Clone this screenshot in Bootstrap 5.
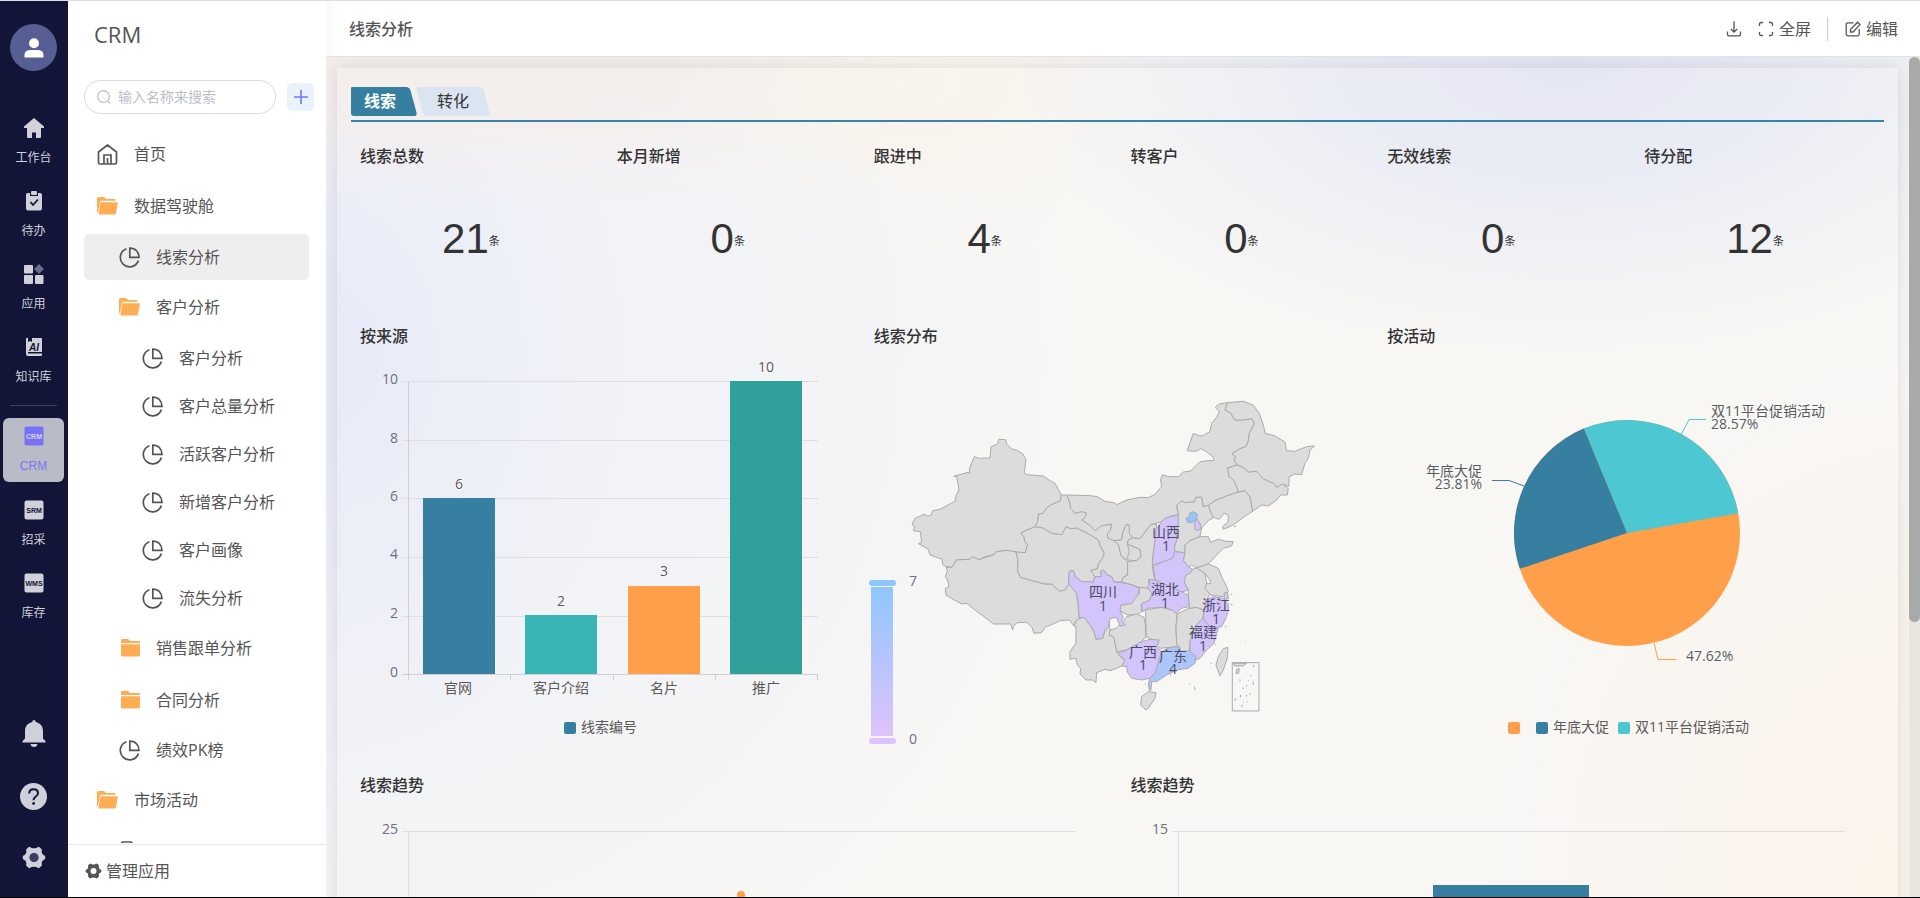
<!DOCTYPE html>
<html lang="zh-CN">
<head>
<meta charset="utf-8">
<meta name="viewport" content="width=device-width, initial-scale=1">
<title>CRM - 线索分析</title>
<link href="https://cdn.jsdelivr.net/npm/bootstrap@5.3.0/dist/css/bootstrap.min.css" rel="stylesheet">
<style>
  :root { --ink:#555; --rail:#121537; --blue:#367fa0; --orange:#ff9f4a; --teal:#4dc7d1; }
  body { font-family:"Open Sans","Noto Sans CJK SC",sans-serif; font-size:16px; line-height:24px; color:var(--ink); border-top:1px solid #dedede; border-bottom:1px solid #000; background:#fff; }
  button { font:inherit; }
  a { color:inherit; text-decoration:none; }
  svg { flex:none; }

  .rail { width:68px; background:var(--rail); color:#d0d1da; font-size:12px; line-height:18px; padding:23px 4px 0 3px; }
  .avatar { width:47px; height:47px; background:#565e93; }
  .rail-list { padding-top:39px; }
  .rail-link { width:61px; height:64px; padding-top:8px; gap:11px; border-radius:6px; margin-bottom:9px; }
  .rail-link.current { background:#b9bbc6; color:#7b74f0; font-family:"Liberation Sans",sans-serif; margin-bottom:10px; }
  .rail-rule { width:47px; height:1px; background:#3d4060; margin:3px 0 12px; }
  .rail-foot { gap:36px; padding-bottom:28px; }
  .rail-foot button { line-height:0; color:#cfd0d9; }
  .rail-tag { font:bold 7px "Liberation Sans",sans-serif; }

  .side { width:258px; background:#fff; }
  .side-title { font-size:22px; line-height:30px; padding:18px 0 0 26px; font-weight:400; }
  .side-search { padding:31px 12px 0 16px; gap:11px; }
  .search-box { height:34px; border:1px solid #d9dae6; border-radius:17px; padding:0 12px; gap:7px; color:#b9bcc6; }
  .search-box input { font-size:14px; color:#555; background:none; }
  .search-box input::placeholder { color:#bbbec8; opacity:1; }
  .add-btn { width:27px; height:28px; border-radius:5px; background:#eaf2fe; color:#6f79f7; }
  .tree { padding:14px 17px 0 16px; margin-bottom:1px; }
  .tree ul { padding-top:1px; }
  .tree li { display:flow-root; }
  .tree a { height:46px; margin:1px 0; padding-left:13px; border-radius:5px; }
  .tree a.folder { height:50px; }
  .tree ul a { padding-left:35px; }
  .tree ul ul a { padding-left:58px; }
  .tree a svg { margin-right:16px; }
  .tree a.current { background:#eee; }
  .side-foot { border-top:1px solid #e6e6e6; height:53px; padding:0 17px; gap:5px; }

  .topbar { height:56px; border-bottom:1px solid #e3e1e1; padding:0 22px 0 23px; background:linear-gradient(90deg,#f9f9f9,#fff 14px); }
  .topbar h1 { font-size:16px; line-height:24px; font-weight:500; color:#555; }
  .topbar button { gap:5px; color:#555; }
  .topbar-rule { width:1px; height:24px; background:#ccc; margin:0 17px 0 16px; }

  .canvas-bg { background:
      radial-gradient(ellipse 560px 300px at 1240px 0, #e2e5f3 0, #e9ebf5 40%, #e9ebf500 100%),
      radial-gradient(ellipse 260px 170px at 600px 30px, #f9f4ea 0, #f9f4ea00 100%),
      radial-gradient(ellipse 640px 150px at 180px 0, #f4edeb 0, #f4edeb 30%, #f4edeb00 100%),
      radial-gradient(ellipse 300px 420px at 0 300px, #e7eaf8 0, #e7eaf800 100%),
      radial-gradient(ellipse 760px 760px at 0 300px, #eff1f8 0, #f1f2f7 50%, #f1f2f700 100%),
      radial-gradient(ellipse 440px 560px at 100% 100%, #fbf3ea 0, #fbf3eb 30%, #fbf3ea00 100%),
      #f8f7f4; }
  .panel { margin:11px 11px 0; padding:19px 14px 0; background:rgba(255,255,255,.08); box-shadow:0 0 16px rgba(60,50,60,.13); }
  .tabs { border-bottom:2px solid #3b83a4; padding-bottom:4px; margin-bottom:1px; }
  .tab { height:29px; line-height:29px; color:#333; }
  .tab svg { left:0; top:0; }
  .tab span { position:relative; }
  .tab-a { width:66px; color:#fff; font-weight:700; }
  .tab-a span { margin-left:13px; }
  .tab-b { width:74px; margin-left:-1px; }
  .tab-b span { margin-left:21px; }

  .tiles { display:grid; grid-template-columns:repeat(6,1fr); gap:8px; padding-top:7px; }
  .tile { padding-top:14px; min-width:0; }
  .tile h2 { font-size:16px; line-height:24px; font-weight:500; color:#333; padding-left:9px; margin:0; }
  .figure-tile { height:172px; }
  .figure-value { font:42px/42px "Liberation Sans",sans-serif; color:#333; padding:8px 9px 0 0; }
  .figure-value small { font:11px/11px "Noto Sans CJK SC",sans-serif; padding-top:2px; }
  .third { grid-column:span 2; height:441px; }
  .half { grid-column:span 3; height:441px; }
  .chart { display:block; width:100%; height:400px; font-size:14px; fill:#5a5a5a; }
  .chart .halo { paint-order:stroke; stroke:#fafafa; stroke-width:2px; }
  .scroll { width:11px; background:#e9e6e0; }
  .scroll-thumb { height:565px; background:#a9a9a9; border-radius:6px; }
</style>
</head>
<body class="vh-100 d-flex overflow-hidden">

<svg width="0" height="0" class="position-absolute" aria-hidden="true">
  <defs>
    <symbol id="i-pie" viewBox="0 0 21 21"><path d="M7.5 1.8A9.3 9.3 0 1 0 19.4 13.6M10.8 1.2V10.4H20C20 5 16.500 1.200 10.800 1.200Z" fill="none" stroke="#555" stroke-width="1.700"/></symbol>
    <symbol id="i-open" viewBox="0 0 21 18"><path d="M0 1.500Q0 0 1.500 0H7L9 2H17.500Q18.500 2 18.500 3V3.800H4.500Q3.200 3.800 3 5L1 15H0Z" fill="#ffad55"/><path d="M4.300 5.200H20Q21 5.200 20.800 6.200L18.900 16.500Q18.600 17.600 17.500 17.600H1.800Q1.300 17.600 1.500 16.800L3.200 6.200Q3.400 5.200 4.300 5.200Z" fill="#ffad55"/></symbol>
    <symbol id="i-folder" viewBox="0 0 21 18"><path d="M2 1Q2 0 3 0H9L11 2H20Q21 2 21 3V4H2ZM2 5.200H21V16.500Q21 17.500 20 17.500H3Q2 17.500 2 16.500Z" fill="#ffad55"/></symbol>
    <symbol id="i-gear" viewBox="0 0 24 24"><path fill-rule="evenodd" d="M6 1.500Q7 .5 8.200 1.200L9.500 2Q12 2.800 14.500 2L15.800 1.200Q17 .5 18 1.500L20 3.500Q20.500 4.300 20 5.500Q19.800 8 21.500 9.200L23 9.800Q23.800 10.300 23.800 12T23 14.200L21.500 14.800Q19.800 16 20 18.500Q20.500 19.700 20 20.500L18 22.500Q17 23.500 15.800 22.800L14.500 22Q12 21.200 9.500 22L8.200 22.800Q7 23.500 6 22.500L4 20.500Q3.500 19.700 4 18.500Q4.200 16 2.500 14.800L1 14.200Q.2 13.700 .2 12T1 9.800L2.500 9.200Q4.200 8 4 5.500Q3.500 4.300 4 3.500ZM12 7.500A4.500 4.500 0 1 0 12 16.500A4.500 4.500 0 1 0 12 7.500Z" fill="currentColor"/></symbol>
  </defs>
</svg>

<nav class="rail d-flex flex-column align-items-center flex-shrink-0" aria-label="应用">
  <button class="avatar btn p-0 border-0 rounded-circle d-flex align-items-center justify-content-center flex-shrink-0" aria-label="账户">
    <svg width="20" height="20" viewBox="0 0 20 20" fill="#fff"><circle cx="10" cy="5.200" r="5"/><path d="M.5 19.500V17Q.5 12 7 12H13Q19.500 12 19.500 17V19.500Z"/></svg>
  </button>
  <div class="rail-list d-flex flex-column align-items-center flex-grow-1">
    <a href="#" class="rail-link d-flex flex-column align-items-center">
      <svg width="20" height="20" viewBox="0 0 20 20" fill="currentColor"><path d="M10 0 20 8.500V10H17V19Q17 20 16 20H12V14.500H8V20H4Q3 20 3 19V10H0V8.500Z"/></svg>工作台</a>
    <a href="#" class="rail-link d-flex flex-column align-items-center">
      <svg width="20" height="20" viewBox="0 0 20 20"><path d="M4 2H6V5H14V2H16Q18 2 18 4V17.500Q18 19.500 16 19.500H4Q2 19.500 2 17.500V4Q2 2 4 2Z" fill="currentColor"/><rect x="7" y="0" width="6" height="4" rx="1" fill="currentColor"/><path d="M6.500 11 9 14 14 8.500" fill="none" stroke="#121537" stroke-width="1.800"/></svg>待办</a>
    <a href="#" class="rail-link d-flex flex-column align-items-center">
      <svg width="20" height="20" viewBox="0 0 20 20" fill="currentColor"><rect x="0" y="1" width="9" height="8.500" rx="1"/><rect x="0" y="11" width="9" height="9" rx="1"/><rect x="11" y="11" width="8.500" height="9" rx="1"/><path d="M15 0 20 5 15 10 10 5Z" fill="#6a6d8a"/></svg>应用</a>
    <a href="#" class="rail-link d-flex flex-column align-items-center">
      <svg width="20" height="20" viewBox="0 0 20 20"><path d="M2 1H4V5L6 4 8 5V1H17Q18 1 18 2V15H4V16.500H18V18Q18 19 17 19H4Q2 19 2 17Z" fill="currentColor"/><text x="5" y="13.500" fill="#121537" style="font:italic bold 10px 'Liberation Sans',sans-serif">AI</text></svg>知识库</a>
    <div class="rail-rule"></div>
    <a href="#" class="rail-link current d-flex flex-column align-items-center" aria-current="page">
      <svg width="20" height="20" viewBox="0 0 20 20"><rect x=".5" y=".5" width="19" height="19" rx="2" fill="#7a70f5"/><text x="10" y="12.500" text-anchor="middle" fill="#d5d3f6" class="rail-tag">CRM</text></svg>CRM</a>
    <a href="#" class="rail-link d-flex flex-column align-items-center">
      <svg width="20" height="20" viewBox="0 0 20 20"><rect x=".5" y=".5" width="19" height="19" rx="2" fill="currentColor"/><text x="10" y="12.500" text-anchor="middle" fill="#121537" class="rail-tag">SRM</text></svg>招采</a>
    <a href="#" class="rail-link d-flex flex-column align-items-center">
      <svg width="20" height="20" viewBox="0 0 20 20"><rect x=".5" y=".5" width="19" height="19" rx="2" fill="currentColor"/><text x="10" y="12.500" text-anchor="middle" fill="#121537" class="rail-tag">WMS</text></svg>库存</a>
  </div>
  <div class="rail-foot d-flex flex-column align-items-center">
    <button class="btn p-0 border-0" aria-label="通知"><svg width="24" height="27" viewBox="0 0 24 27" fill="currentColor"><path d="M12 0Q13.500 0 13.800 2C18 3 21 6 21 11V18.500L23.500 21V22.500H.5V21L3 18.500V11C3 6 6 3 10.200 2Q10.500 0 12 0ZM8.500 24H15.500Q15 27 12 27T8.500 24Z"/></svg></button>
    <button class="btn p-0 border-0" aria-label="帮助"><svg width="27" height="27" viewBox="0 0 27 27"><circle cx="13.500" cy="13.500" r="13.500" fill="currentColor"/><path d="M9.200 10.500Q9.200 6.300 13.600 6.300T18 10.200Q18 12 15.800 13.500Q13.600 15 13.600 17.200" fill="none" stroke="#121537" stroke-width="2"/><circle cx="13.600" cy="20.500" r="1.400" fill="#121537"/></svg></button>
    <button class="btn p-0 border-0" aria-label="设置"><svg width="24" height="23"><use href="#i-gear"/><circle cx="12" cy="11.500" r="4.500" fill="#3b3f66"/></svg></button>
  </div>
</nav>

<aside class="side d-flex flex-column flex-shrink-0">
  <h2 class="side-title m-0">CRM</h2>
  <div class="side-search d-flex align-items-center">
    <div class="search-box d-flex align-items-center flex-grow-1">
      <label for="tree-search" class="d-flex" aria-label="搜索"><svg width="14" height="14" viewBox="0 0 14 14" fill="none" stroke="currentColor" stroke-width="1.200"><circle cx="6.500" cy="6.500" r="5.900"/><path d="M11 11 13.500 13.500"/></svg></label>
      <input id="tree-search" type="text" class="border-0 p-0 w-100" placeholder="输入名称来搜索">
    </div>
    <button class="add-btn btn p-0 border-0 d-flex align-items-center justify-content-center flex-shrink-0" aria-label="新建"><svg width="14" height="14" viewBox="0 0 14 14" stroke="currentColor" stroke-width="1.600"><path d="M7 0V14M0 7H14"/></svg></button>
  </div>
  <ul class="tree list-unstyled flex-grow-1 overflow-hidden">
    <li><a href="#" class="folder d-flex align-items-center"><svg width="21" height="21" viewBox="0 0 21 21" fill="none" stroke="#555" stroke-width="1.700"><path d="M1.500 8 10.500 1 19.500 8V18.500Q19.500 20 18 20H3Q1.500 20 1.500 18.500ZM7 20V11H14V20M10.500 14V20"/></svg>首页</a></li>
    <li><a href="#" class="folder d-flex align-items-center"><svg width="21" height="18"><use href="#i-open"/></svg>数据驾驶舱</a>
      <ul class="list-unstyled">
        <li><a href="#" class="current d-flex align-items-center" aria-current="page"><svg width="21" height="21"><use href="#i-pie"/></svg>线索分析</a></li>
        <li><a href="#" class="folder d-flex align-items-center"><svg width="21" height="18"><use href="#i-open"/></svg>客户分析</a>
          <ul class="list-unstyled">
            <li><a href="#" class="d-flex align-items-center"><svg width="21" height="21"><use href="#i-pie"/></svg>客户分析</a></li>
            <li><a href="#" class="d-flex align-items-center"><svg width="21" height="21"><use href="#i-pie"/></svg>客户总量分析</a></li>
            <li><a href="#" class="d-flex align-items-center"><svg width="21" height="21"><use href="#i-pie"/></svg>活跃客户分析</a></li>
            <li><a href="#" class="d-flex align-items-center"><svg width="21" height="21"><use href="#i-pie"/></svg>新增客户分析</a></li>
            <li><a href="#" class="d-flex align-items-center"><svg width="21" height="21"><use href="#i-pie"/></svg>客户画像</a></li>
            <li><a href="#" class="d-flex align-items-center"><svg width="21" height="21"><use href="#i-pie"/></svg>流失分析</a></li>
          </ul></li>
        <li><a href="#" class="folder d-flex align-items-center"><svg width="21" height="18"><use href="#i-folder"/></svg>销售跟单分析</a></li>
        <li><a href="#" class="folder d-flex align-items-center"><svg width="21" height="18"><use href="#i-folder"/></svg>合同分析</a></li>
        <li><a href="#" class="d-flex align-items-center"><svg width="21" height="21"><use href="#i-pie"/></svg>绩效PK榜</a></li>
      </ul></li>
    <li><a href="#" class="folder d-flex align-items-center"><svg width="21" height="18"><use href="#i-open"/></svg>市场活动</a>
      <ul class="list-unstyled">
        <li><a href="#" class="d-flex align-items-center" aria-label="表单"><svg width="21" height="21" viewBox="0 0 21 21" fill="none" stroke="#555" stroke-width="1.700"><path d="M4 1H12L17 6V18.500Q17 20 15.500 20H4Q2.500 20 2.500 18.500V2.500Q2.500 1 4 1Z"/></svg></a></li>
      </ul></li>
  </ul>
  <div class="side-foot d-flex align-items-center flex-shrink-0">
    <a href="#" class="d-flex align-items-center gap-1"><svg width="17" height="16"><use href="#i-gear"/></svg>管理应用</a>
  </div>
</aside>

<div class="d-flex flex-column flex-grow-1 overflow-hidden">
  <header class="topbar d-flex align-items-center flex-shrink-0">
    <h1 class="m-0 me-auto">线索分析</h1>
    <button class="btn p-0 border-0 d-flex me-3" aria-label="下载"><svg width="16" height="16" viewBox="0 0 16 16" fill="none" stroke="#555" stroke-width="1.300"><path d="M8 .5V11M4.800 8 8 11 11.200 8M1.500 10.500V13.500Q1.500 14.800 3 14.800H13Q14.500 14.800 14.500 13.500V10.500"/></svg></button>
    <button class="btn p-0 border-0 d-flex align-items-center"><svg width="16" height="16" viewBox="0 0 16 16" fill="none" stroke="#555" stroke-width="1.300"><path d="M1.500 5V3Q1.500 1.500 3 1.500H5M11 1.500H13Q14.500 1.500 14.500 3V5M14.500 11V13Q14.500 14.500 13 14.500H11M5 14.500H3Q1.500 14.500 1.500 13V11"/></svg>全屏</button>
    <span class="topbar-rule"></span>
    <button class="btn p-0 border-0 d-flex align-items-center"><svg width="16" height="16" viewBox="0 0 16 16" fill="none" stroke="#555" stroke-width="1.300"><path d="M8.500 1.800H3Q1.200 1.800 1.200 3.500V13Q1.200 14.800 3 14.800H12.500Q14.200 14.800 14.200 13V8M5.500 11V8.500L12.500 1.200 15 3.600 8 11Z"/></svg>编辑</button>
  </header>

  <div class="d-flex flex-grow-1 overflow-hidden canvas-bg">
    <main class="flex-grow-1 overflow-hidden">
      <div class="panel">
        <div class="tabs d-flex" role="tablist">
          <button class="tab tab-a btn p-0 border-0 rounded-0 text-start position-relative" role="tab" aria-selected="true"><svg class="position-absolute" width="66" height="29" viewBox="0 0 66 29"><path d="M0 1Q0 0 1 0H55Q58.500 0 59.500 3.500L65.500 25.500Q66.300 29 63 29H3Q0 29 0 26Z" fill="#367fa0"/></svg><span>线索</span></button>
          <button class="tab tab-b btn p-0 border-0 rounded-0 text-start position-relative" role="tab" aria-selected="false"><svg class="position-absolute" width="74" height="29" viewBox="0 0 74 29"><path d="M3 0H64Q67 0 68 3.500L73.500 25.500Q74.300 29 71 29H11Q8 29 7 26L.5 3.500Q-.2 0 3 0Z" fill="#dbe5f2"/></svg><span>转化</span></button>
        </div>

        <div class="tiles">
          <section class="tile figure-tile d-flex flex-column"><h2>线索总数</h2><div class="figure-value d-flex flex-grow-1 align-items-center justify-content-center">21<small>条</small></div></section>
          <section class="tile figure-tile d-flex flex-column"><h2>本月新增</h2><div class="figure-value d-flex flex-grow-1 align-items-center justify-content-center">0<small>条</small></div></section>
          <section class="tile figure-tile d-flex flex-column"><h2>跟进中</h2><div class="figure-value d-flex flex-grow-1 align-items-center justify-content-center">4<small>条</small></div></section>
          <section class="tile figure-tile d-flex flex-column"><h2>转客户</h2><div class="figure-value d-flex flex-grow-1 align-items-center justify-content-center">0<small>条</small></div></section>
          <section class="tile figure-tile d-flex flex-column"><h2>无效线索</h2><div class="figure-value d-flex flex-grow-1 align-items-center justify-content-center">0<small>条</small></div></section>
          <section class="tile figure-tile d-flex flex-column"><h2>待分配</h2><div class="figure-value d-flex flex-grow-1 align-items-center justify-content-center">12<small>条</small></div></section>

          <section class="tile third"><h2>按来源</h2>
            <svg class="chart" viewBox="0 0 500 400" preserveAspectRatio="xMinYMin meet">
              <path d="M51 33.500H467M51 92.500H467M51 150.500H467M51 209.500H467M51 268.500H467" stroke="#dedee2"/>
              <path d="M57.500 33V332M51 326.500H467M159.500 326V332M262.500 326V332M364.500 326V332M466.500 326V332" stroke="#cfcfd4" fill="none"/>
              <rect x="72" y="150" width="72" height="176" fill="#367fa0"/><rect x="174" y="267" width="72" height="59" fill="#39b5b5"/><rect x="277" y="238" width="72" height="88" fill="#ff9f4a"/><rect x="379" y="33" width="72" height="293" fill="#30a19a"/>
              <g text-anchor="end" fill="#6e7079"><text x="47" y="36">10</text><text x="47" y="95">8</text><text x="47" y="153">6</text><text x="47" y="211">4</text><text x="47" y="270">2</text><text x="47" y="329">0</text></g>
              <g text-anchor="middle"><g class="halo"><text x="108" y="141">6</text><text x="210" y="258">2</text><text x="313" y="228">3</text><text x="415" y="24">10</text></g><text x="107" y="345">官网</text><text x="210" y="345">客户介绍</text><text x="313" y="345">名片</text><text x="415" y="345">推广</text></g>
              <rect x="213" y="374" width="12" height="12" rx="2" fill="#367fa0"/><text x="230" y="384">线索编号</text>
            </svg></section>

          <section class="tile third"><h2>线索分布</h2>
            <svg class="chart" viewBox="0 0 500 400" preserveAspectRatio="xMinYMin meet">
              <defs><linearGradient id="scale" x1="0" y1="0" x2="0" y2="1"><stop offset="0" stop-color="#90c6ff"/><stop offset="1" stop-color="#dfc3fb"/></linearGradient></defs>
              <rect x="6" y="239" width="22" height="149" fill="url(#scale)"/><rect x="4" y="232" width="27" height="6" rx="3" fill="#8fc5ff"/><rect x="4" y="390" width="27" height="6" rx="3" fill="#e0c3fc"/>
              <text x="44" y="238" fill="#6e7089">7</text><text x="44" y="396" fill="#6e7089">0</text>
              <g transform="translate(-5 32) scale(.3333)" fill="#dcdcdc" stroke="#aaa" stroke-width="3" stroke-linejoin="round">
                <path d="M156 434 165 415 195 402 200 409 213 406 218 392 240 388 285 364 288 347 297 330 290 290 281 289 325 277 330 282 328 268 343 230 356 235 390 234 393 200 413 192 416 178 437 179 440 192 455 207 470 210 489 222 498 240 493 278 500 284 549 288 570 302 585 310 604 345 601 363 575 374 560 384 549 400 536 402 532 428 525 440 482 459 492 470 494 484 503 494 496 518 480 518 468 516 440 511 408 516 402 524 370 532 357 539 337 530 330 538 289 540 276 562 258 560 248 554 246 538 210 525 205 508 188 498 175 491 185 487 181 455 160 452 164 440Z"/>
                <path d="M258 562 276 562 289 540 330 538 337 530 357 539 402 524 408 516 440 511 468 516 474 540 473 575 482 592 510 600 555 612 575 612 598 634 615 630 626 612 640 622 650 640 654 670 658 716 648 722 642 738 628 720 600 722 588 728 556 742 545 758 522 760 516 742 500 727 472 728 462 736 458 750 452 732 400 732 375 712 345 690 320 670 306 672 275 656 258 645 256 625 267 620 263 600 256 590 262 572Z"/>
                <path d="M525 440 550 444 575 460 605 464 618 440 632 446 650 444 690 464 715 480 722 500 733 520 728 535 715 552 713 566 692 572 705 590 698 608 690 604 668 606 648 592 640 572 628 574 626 612 615 630 598 634 575 612 555 612 510 600 482 592 473 575 474 540 468 516 496 518 503 494 494 484 492 470 482 459Z"/>
                <path d="M604 345 621 345 630 370 632 385 645 400 665 395 679 398 676 412 665 420 690 436 706 452 722 438 755 432 752 450 742 462 744 474 762 482 776 495 780 515 785 530 803 545 803 585 790 592 785 606 762 606 755 590 740 584 732 570 722 574 724 590 705 590 692 572 713 566 715 552 728 535 733 520 722 500 715 480 690 464 650 444 632 446 618 440 605 464 575 460 550 444 525 440 532 428 536 402 549 400 560 384 575 374 601 363Z"/>
                <path d="M621 345 690 347 712 350 735 364 762 368 770 374 800 360 840 352 865 353 885 343 905 320 902 300 908 284 925 290 955 290 970 276 990 274 1000 265 1020 245 1045 242 1062 242 1060 232 1040 215 1022 206 1010 214 982 212 1000 160 1020 168 1030 166 1050 155 1055 130 1070 112 1078 95 1066 82 1078 72 1103 68 1095 90 1112 98 1124 120 1148 120 1176 116 1183 130 1168 160 1165 184 1158 200 1140 206 1116 222 1128 232 1122 240 1132 255 1102 264 1108 290 1122 302 1130 320 1135 336 1100 348 1065 362 1046 376 1030 380 1025 352 1008 352 1003 366 975 368 965 362 950 376 955 404 935 408 918 414 905 425 872 434 848 466 840 476 818 474 808 460 808 436 798 434 788 460 785 480 762 482 744 474 742 462 752 450 755 432 722 438 706 452 690 436 665 420 676 412 679 398 665 395 645 400 632 385 630 370Z"/>
                <path d="M762 482 785 480 788 460 798 434 808 436 808 460 818 474 805 480 802 492 840 508 844 530 830 542 800 540 785 530 780 515 776 495ZM802 492 808 515 800 540"/>
                <path d="M818 474 840 476 848 466 872 434 890 432 885 480 880 520 877 555 880 580 885 600 865 598 868 625 838 622 818 615 785 606 790 592 803 585 803 545 830 542 844 530 840 508 802 492 805 480Z"/>
                <path d="M950 376 965 362 975 368 1003 366 1008 352 1025 352 1030 380 1046 376 1052 396 1062 412 1045 422 1026 442 1022 456 1020 470 990 482 975 495 975 518 944 515 944 500 950 480 948 460 955 430 955 404Z"/>
                <path d="M1046 376 1065 362 1100 348 1135 336 1155 332 1170 350 1175 375 1178 394 1150 412 1120 435 1090 448 1088 440 1105 425 1105 405 1092 400 1078 418 1060 412 1052 396Z"/>
                <path d="M1102 264 1132 255 1150 262 1165 276 1190 274 1210 296 1230 306 1240 308 1250 322 1268 312 1285 326 1282 345 1262 345 1250 360 1225 378 1205 375 1178 394 1175 375 1170 350 1155 332 1135 336 1130 320 1122 302 1108 290Z"/>
                <path d="M1103 68 1150 64 1180 76 1198 100 1210 135 1216 160 1245 168 1275 186 1280 212 1305 214 1340 200 1364 198 1350 210 1345 235 1335 250 1325 284 1305 282 1288 290 1286 320 1268 312 1250 322 1240 308 1230 306 1210 296 1190 274 1165 276 1150 262 1132 255 1122 240 1128 232 1116 222 1140 206 1158 200 1165 184 1168 160 1183 130 1176 116 1148 120 1124 120 1112 98 1095 90Z"/>
                <path d="M975 518 975 495 990 482 1020 470 1045 470 1052 487 1075 478 1098 484 1120 485 1115 498 1090 505 1065 530 1045 552 1010 564 995 555 985 560 970 542Z"/>
                <path d="M838 622 868 625 876 640 870 660 844 672 845 695 830 706 800 704 780 692 782 676 800 672 825 655 838 640Z"/>
                <path d="M750 750 768 745 790 725 800 710 830 702 852 712 856 735 858 770 845 785 800 810 770 815 765 790 760 770 748 766Z"/>
                <path d="M658 716 672 712 690 735 702 755 708 778 728 775 735 750 748 728 750 750 748 766 760 770 765 790 770 815 780 830 795 840 790 855 768 866 750 872 735 868 710 878 708 908 698 900 678 900 660 882 662 865 652 855 648 835 630 838 630 815 648 790 648 740 642 738 648 722Z"/>
                <path d="M856 690 905 682 935 690 952 702 948 740 950 790 955 800 930 802 900 805 880 780 858 770 858 735Z"/>
                <path d="M952 702 988 685 1010 682 1032 690 1028 715 1010 735 1000 755 990 785 988 815 962 815 950 790 948 740Z"/>
                <path d="M972 585 998 568 1010 564 1035 580 1040 610 1052 640 1040 660 1032 690 1010 682 988 685 985 645 985 630 972 605Z"/>
                <path d="M1010 564 1045 552 1075 565 1085 590 1100 620 1105 635 1090 650 1052 645 1035 625 1040 610 1052 612 1050 600 1035 580Z"/>
                <path d="M1090 806 1104 802 1102 835 1090 870 1080 888 1068 855 1075 830ZM845 950 865 935 888 938 885 955 865 985 858 990 842 975Z"/>
                <g fill="#d4c4fc">
                  <path d="M888 448 905 425 918 414 955 404 955 430 948 460 950 480 944 500 944 520 938 535 910 545 877 555 880 520 885 480Z"/>
                  <path d="M880 558 910 545 938 535 944 515 975 518 970 542 985 560 998 568 990 580 978 585 972 605 985 630 965 636 930 620 885 600Z"/>
                  <path d="M868 598 885 600 930 620 965 636 985 645 988 680 965 685 950 700 935 690 905 682 860 685 848 696 844 672 870 660 876 640 862 622 870 612Z"/>
                  <path d="M628 574 640 572 648 592 668 606 690 604 698 608 705 590 724 590 722 574 732 570 740 584 755 590 762 606 785 608 818 615 838 625 835 645 825 655 815 672 800 672 782 676 780 692 790 712 785 722 797 735 780 738 770 712 750 716 745 740 735 750 728 775 708 778 702 755 690 735 672 712 658 714 654 670 650 640 626 612Z"/>
                  <path d="M772 820 800 810 845 785 870 778 898 780 890 800 905 815 905 850 885 880 870 895 845 900 815 895 803 878 800 860 785 858 795 840Z"/>
                  <path d="M1040 660 1060 650 1090 655 1105 672 1105 690 1098 715 1085 740 1055 745 1040 730 1030 715 1032 690ZM1092 640 1102 636 1106 656 1094 658Z"/>
                  <path d="M1010 735 1028 715 1040 730 1055 745 1075 745 1062 790 1040 810 1020 835 1008 840 990 820 990 785 1000 755Z"/>
                  <path d="M1010 415 1020 430 1023 445 1015 452 1005 448 1004 430Z"/>
                </g>
                <path d="M905 815 930 802 958 800 962 815 990 812 1008 830 1005 850 985 865 950 870 920 885 890 905 875 905 873 930 868 932 865 910 870 895 885 880Z" fill="#aec5fb"/>
                <path d="M978 415 990 408 988 400 1000 395 1013 403 1008 420 995 428 982 426Z" fill="#90c6ff"/>
                <path d="M1117 848H1197V993H1117Z" fill="none"/>
                <path d="M1119 850 1160 850 1150 858 1125 858ZM1130 868 1138 866 1136 880 1128 880ZM1181 855V862M1172 885V888M1165 900V903M1140 898V903M1160 915V920M1150 922V927M1170 940V945M1142 945V952M1160 945V950M1126 955V962M1150 965V968M1146 975V982M1180 905V915M1160 965H1163" stroke-width="3"/>
                <path d="M1112 645 1116 640M1112 672 1118 676M1095 738 1099 742M1065 792 1068 796M1052 848 1056 852M988 912 990 915M1003 920 1005 930M930 882 934 885M855 910 856 914M1122 440 1128 440M1155 785 1157 786" stroke-width="3"/>
              </g>
              <g text-anchor="middle" fill="#4c4a66">
                <text x="301" y="189">山西</text><text x="301" y="203">1</text><text x="300" y="246">湖北</text><text x="300" y="260">1</text><text x="351" y="262">浙江</text><text x="351" y="276">1</text><text x="338" y="289">福建</text><text x="338" y="303">1</text><text x="278" y="309">广西</text><text x="278" y="322">1</text><text x="308" y="313">广东</text><text x="308" y="326">4</text><text x="238" y="249">四川</text><text x="238" y="263">1</text>
              </g>
            </svg></section>

          <section class="tile third"><h2>按活动</h2>
            <svg class="chart" viewBox="0 0 500 400" preserveAspectRatio="xMinYMin meet">
              <circle cx="249" cy="185" r="113" fill="#ff9f4a"/>
              <path d="M249 185 205.800 80.600A113 113 0 0 1 360.200 165.200Z" fill="#4dc7d1"/>
              <path d="M249 185 141.800 220.800A113 113 0 0 1 205.800 80.600Z" fill="#367fa0"/>
              <g fill="none"><path d="M303 87 311 71.500H328" stroke="#4dc7d1"/><path d="M146 138 131 132.500H114" stroke="#367fa0"/><path d="M276 295 280 311.500H298" stroke="#ff9f4a"/></g>
              <g class="halo"><text x="333" y="68">双11平台促销活动</text><text x="333" y="81">28.57%</text><text x="308" y="313">47.62%</text>
              <g text-anchor="end"><text x="104" y="128">年底大促</text><text x="104" y="141">23.81%</text></g></g>
              <rect x="130" y="374" width="12" height="12" rx="2" fill="#ff9f4a"/><rect x="158" y="374" width="12" height="12" rx="2" fill="#367fa0"/><text x="175" y="384">年底大促</text><rect x="240" y="374" width="12" height="12" rx="2" fill="#4dc7d1"/><text x="257" y="384">双11平台促销活动</text>
            </svg></section>

          <section class="tile half"><h2>线索趋势</h2>
            <svg class="chart" viewBox="0 0 750 400" preserveAspectRatio="xMinYMin meet">
              <path d="M51 34.500H724M57.500 34V400" stroke="#dedee0"/><text x="47" y="37" text-anchor="end" fill="#6e7079">25</text>
              <path d="M390 400V98" stroke="#ff9f4a" stroke-width="8" stroke-linecap="round"/>
            </svg></section>
          <section class="tile half"><h2>线索趋势</h2>
            <svg class="chart" viewBox="0 0 750 400" preserveAspectRatio="xMinYMin meet">
              <path d="M51 34.500H724M57.500 34V400" stroke="#dedee0"/><text x="47" y="37" text-anchor="end" fill="#6e7079">15</text>
              <rect x="312" y="88" width="156" height="312" fill="#367fa0"/>
            </svg></section>
        </div>
      </div>
    </main>
    <div class="scroll flex-shrink-0"><div class="scroll-thumb"></div></div>
  </div>
</div>
<script src="https://cdn.jsdelivr.net/npm/bootstrap@5.3.0/dist/js/bootstrap.bundle.min.js"></script>
</body>
</html>
